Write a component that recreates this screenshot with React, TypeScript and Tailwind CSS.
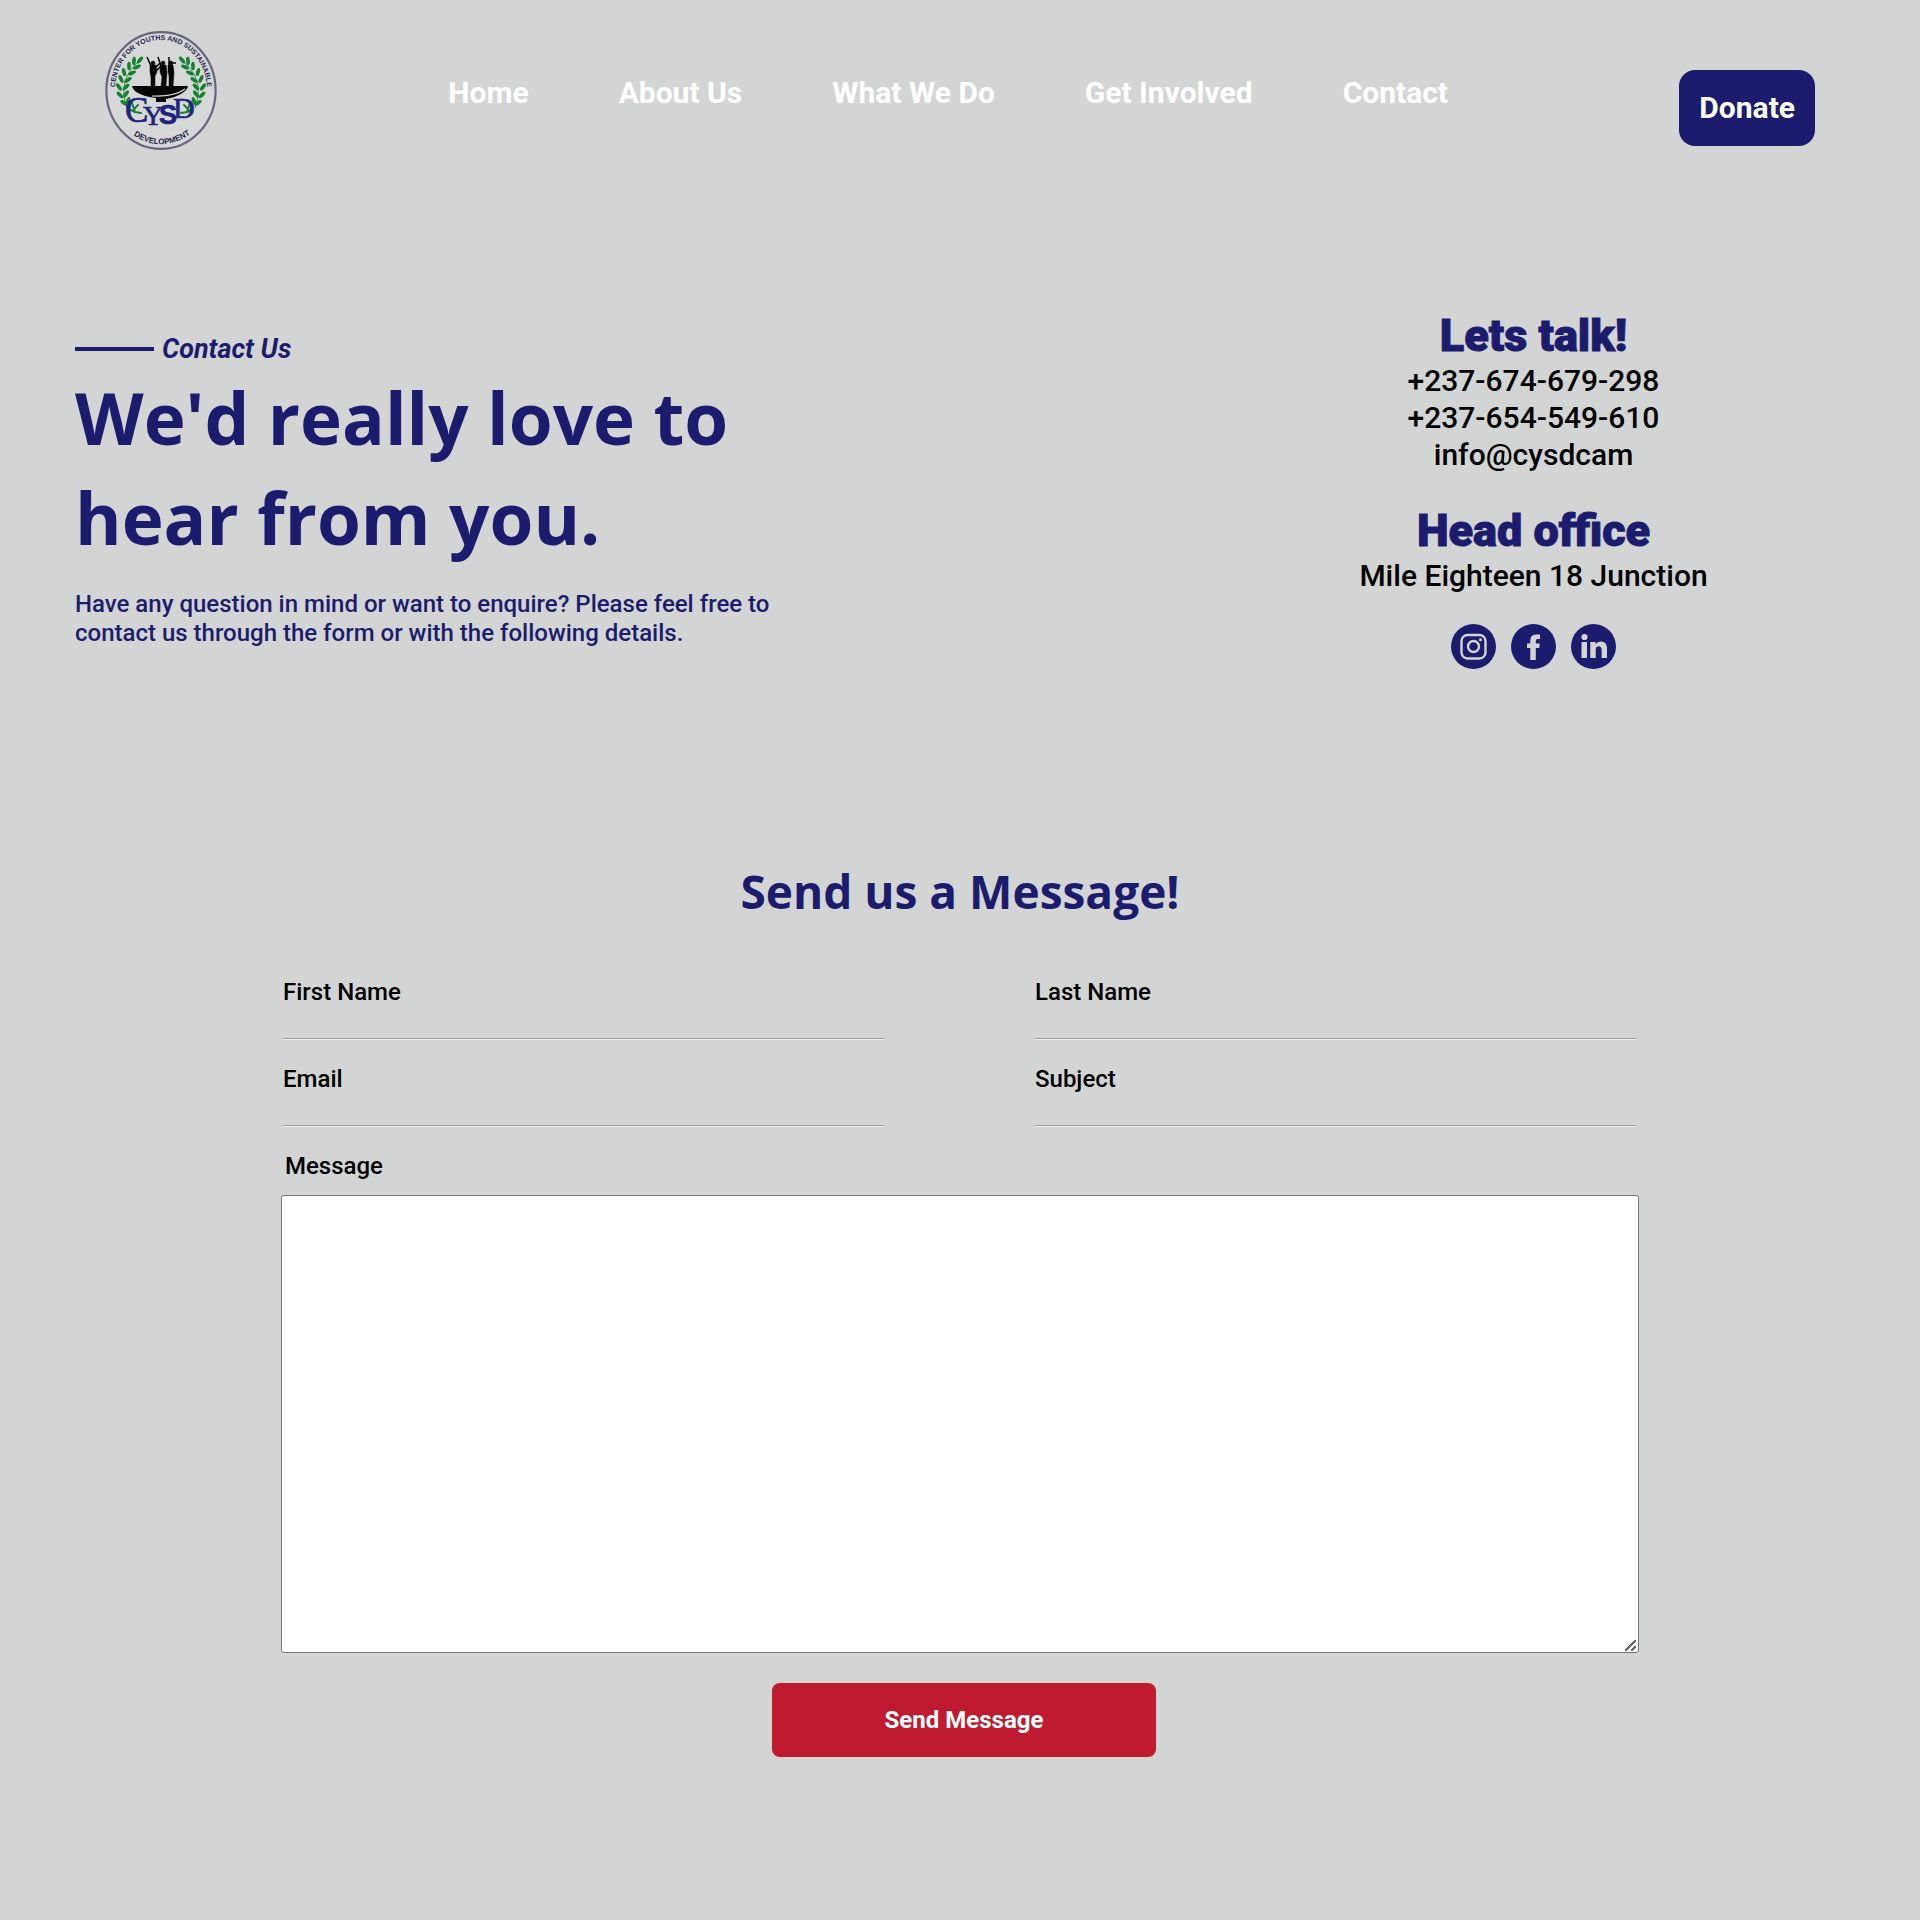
import React from 'react';

const NAV = ['Home', 'About Us', 'What We Do', 'Get Involved', 'Contact'];

// Leaves of the left laurel branch: x, y, rotation.
const LEAVES: [number, number, number][] = [
  [50, 40, 40], [44, 41, 5], [47, 47, 65], [39, 46, 0], [42, 53, 65], [34, 52, -15], [38, 60, 55],
  [31, 59, -25], [36, 67, 45], [29, 67, -35], [36, 74, 35], [30, 75, -45],
  [38, 81, 20], [34, 83, -55],
];

function Laurel() {
  return (
    <g fill="#17802f">
      <path d="M52 39 Q26 58 37 88" fill="none" stroke="#17802f" strokeWidth="0.800" />
      {LEAVES.map(([x, y, r], i) => (
        <ellipse key={i} cx={x} cy={y} rx="1.900" ry="4.200" transform={`rotate(${r} ${x} ${y})`} />
      ))}
      <path d="M42 83 l3 9 M45 92 l6 1 M44 89 l4 -4 M41 90 l4 2" stroke="#17802f" strokeWidth="2" strokeLinecap="round" />
    </g>
  );
}

function Logo() {
  return (
    <svg viewBox="15 11 112 119" className="h-[119px] w-28" role="img" aria-label="CYSD">
      <defs>
        <path id="arc-top" d="M25 70 A46 50 0 1 1 117 70" />
        <path id="arc-bottom" d="M39 112 Q71 137 105 111" />
      </defs>
      <ellipse cx="71" cy="70.500" rx="54.600" ry="58.400" fill="#d6d8d8" stroke="#67647c" strokeWidth="2.200" />
      <Laurel />
      <g transform="translate(142 0) scale(-1 1)">
        <Laurel />
      </g>
      <path d="M42 66 H98 Q96 75 76 79 V82 H66 V78 Q44 75 42 66 Z" fill="#050505" />
      <path d="M62 76 Q84 77 95 69" fill="none" stroke="#d6d8d8" strokeWidth="1.200" />
      <g fill="#050505" stroke="#050505">
        <circle cx="63" cy="43" r="1.800" />
        <circle cx="73" cy="43" r="1.800" />
        <circle cx="81" cy="43" r="1.800" />
        <path d="M60 45 h6 l1 7 -2 4 v10 h-4 v-9 l-1 -5 Z M70 45 h6 l1 8 -1 13 h-5 l1 -9 -2 -5 Z M78 45 h5 l1 8 -1 13 h-4 v-10 l-1 -4 Z" strokeWidth="0.500" />
        <path d="M61 46 L57 37 M71 46 L68 37 M70 47 L66 51 M79 46 L79 37 M83 43 H86 M66 47 L70 43" fill="none" strokeWidth="1.500" />
      </g>
      <text fontFamily="'Liberation Serif', serif" fill="#20237c" stroke="#20237c" strokeWidth="0.700">
        <tspan x="35" y="102" fontSize="35">C</tspan>
        <tspan x="53" y="105" fontSize="28">Y</tspan>
        <tspan x="69" y="104" fontSize="27" fontWeight="700" fontFamily="'Liberation Sans', sans-serif">S</tspan>
        <tspan x="83" y="98" fontSize="30">D</tspan>
      </text>
      <g fontFamily="'Liberation Sans', sans-serif" fontWeight="700" fill="#25254b">
        <text fontSize="7">
          <textPath href="#arc-top" startOffset="50%" textAnchor="middle">CENTER FOR YOUTHS AND SUSTAINABLE</textPath>
        </text>
        <text fontSize="8">
          <textPath href="#arc-bottom" startOffset="50%" textAnchor="middle">DEVELOPMENT</textPath>
        </text>
      </g>
    </svg>
  );
}

function Social({ label, children }: { label: string; children: React.ReactNode }) {
  return (
    <a href="#" aria-label={label}>
      <svg viewBox="0 0 45 45" className="size-[45px]">
        <circle cx="22.500" cy="22.500" r="22.500" fill="#1c1c6e" />
        {children}
      </svg>
    </a>
  );
}

function Field({ id, label, type = 'text' }: { id: string; label: string; type?: string }) {
  return (
    <div className="flex flex-col">
      <label htmlFor={id} className="text-2xl leading-7 font-medium">{label}</label>
      <input
        id={id}
        type={type}
        className="h-[33px] w-full border-b border-[#9a9a9a] bg-transparent text-2xl shadow-[0_1px_0_#eeeeee] outline-none"
      />
    </div>
  );
}

export default function App() {
  return (
    <div className="min-h-screen bg-[#d3d5d4] pb-40 font-[Roboto,sans-serif] text-black">
      <header className="flex items-start justify-between px-[105px] pt-[31px]">
        <a href="#"><Logo /></a>
        <nav className="mt-11 flex gap-[90px] text-3xl leading-9 font-bold text-white">
          {NAV.map((n) => <a key={n} href="#">{n}</a>)}
        </nav>
        <button className="mt-[39px] h-[76px] rounded-2xl bg-[#1c1c6e] px-5 text-3xl font-bold text-white">Donate</button>
      </header>

      <main>
        <section className="flex items-start justify-between px-[75px] pt-40">
          <div className="w-[720px] pt-[23px] text-[#1c1c6e]">
            <p className="flex items-center gap-2 text-[27px] leading-8 font-bold italic">
              <span className="h-1 w-[79px] bg-[#1c1c6e]" />
              Contact Us
            </p>
            <h1 className="mt-[3px] font-['Open_Sans',sans-serif] text-[71px] leading-[100px] font-bold">
              We'd really love to<br />hear from you.
            </h1>
            <p className="mt-[22px] text-2xl leading-[29px] font-medium">
              Have any question in mind or want to enquire? Please feel free to contact us through the form or with the following details.
            </p>
          </div>
          <div className="flex w-[623px] flex-col items-center text-3xl leading-[37px] font-medium">
            <h2 className="text-[45px] leading-[52px] font-black text-[#1c1c6e] [-webkit-text-stroke:1px_#1c1c6e]">Lets talk!</h2>
            <p>+237-674-679-298</p>
            <p>+237-654-549-610</p>
            <p>info@cysdcam</p>
            <h2 className="mt-8 text-[45px] leading-[52px] font-black text-[#1c1c6e] [-webkit-text-stroke:1px_#1c1c6e]">Head office</h2>
            <p>Mile Eighteen 18 Junction</p>
            <div className="mt-[30px] flex gap-[15px]">
              <Social label="Instagram">
                <g fill="none" stroke="#d3d5d4" strokeWidth="2.400">
                  <rect x="10.500" y="11" width="24" height="23.500" rx="6" />
                  <circle cx="22.500" cy="22.500" r="5.500" />
                </g>
                <circle cx="29.500" cy="15.800" r="1.500" fill="#d3d5d4" />
              </Social>
              <Social label="Facebook">
                <path d="M19.300 36 V24 H16 V19.500 H19.300 V16.500 Q19.300 10.500 25 10.500 H29 V15 H26.500 Q24.800 15 24.800 17 V19.500 H28.800 L28.200 24 H24.800 V36 Z" fill="#d3d5d4" />
              </Social>
              <Social label="LinkedIn">
                <g fill="#d3d5d4">
                  <circle cx="13.500" cy="13" r="3.100" />
                  <path d="M10.500 18 H16 V34 H10.500 Z M19.300 18 H24.500 V20.300 Q26.200 17.600 29.800 17.600 Q36 17.600 36 25 V34 H30.600 V26 Q30.600 22.200 27.700 22.200 Q24.700 22.200 24.700 26 V34 H19.300 Z" />
                </g>
              </Social>
            </div>
          </div>
        </section>

        <section className="mt-[190px] flex flex-col items-center">
          <h2 className="font-['Open_Sans',sans-serif] text-[46px] leading-[64px] font-bold text-[#1c1c6e]">Send us a Message!</h2>
          <form className="mt-[55px] flex w-full max-w-[1358px] flex-col" onSubmit={(e) => e.preventDefault()}>
            <div className="grid grid-cols-2 gap-x-[151px] gap-y-[26px] pr-[3px] pl-0.5">
              <Field id="first" label="First Name" />
              <Field id="last" label="Last Name" />
              <Field id="email" label="Email" type="email" />
              <Field id="subject" label="Subject" />
            </div>
            <label htmlFor="message" className="mt-[26px] px-1 text-2xl leading-7 font-medium">Message</label>
            <textarea
              id="message"
              className="mt-[15px] h-[458px] w-full resize rounded-[3px] border border-[#767676] bg-white p-1 text-2xl outline-none [&::-webkit-resizer]:bg-[linear-gradient(135deg,transparent_44%,#666_44%,#666_55%,transparent_55%),linear-gradient(135deg,transparent_40%,#666_40%,#666_62%,transparent_62%)] [&::-webkit-resizer]:bg-[size:11px_11px,5px_5px] [&::-webkit-resizer]:bg-[position:2px_3px,8px_9px] [&::-webkit-resizer]:bg-no-repeat"
            />
            <div className="mt-[30px] flex justify-center pl-2">
              <button className="h-[74px] w-96 rounded-lg bg-[#bf1a2f] text-2xl font-bold text-white">Send Message</button>
            </div>
          </form>
        </section>
      </main>
    </div>
  );
}
